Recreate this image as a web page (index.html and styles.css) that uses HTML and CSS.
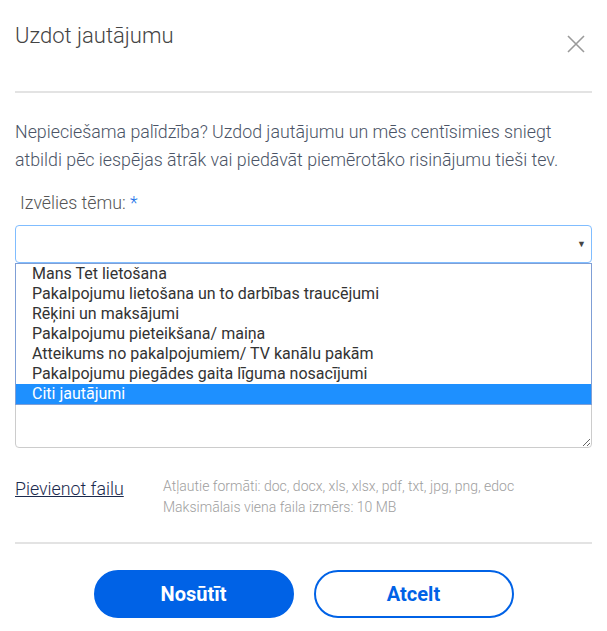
FILE: index.html
```html
<!DOCTYPE html>
<html lang="lv">
<head>
<meta charset="utf-8">
<link rel="stylesheet" href="styles.css">
</head>
<body>
<div class="modal">
  <div class="modal-header">
    <h1 class="title">Uzdot jautājumu</h1>
    <span class="close" aria-label="Aizvērt">
      <svg width="18" height="18" viewBox="0 0 18 18"><path d="M1 1L17 17M17 1L1 17" stroke="#9a9a9a" stroke-width="1.6" fill="none"/></svg>
    </span>
  </div>
  <div class="modal-body">
    <p class="intro">Nepieciešama palīdzība? Uzdod jautājumu un mēs centīsimies sniegt atbildi pēc iespējas ātrāk vai piedāvāt piemērotāko risinājumu tieši tev.</p>
    <label class="field-label">Izvēlies tēmu: <span class="req">*</span></label>
    <div class="select-wrap">
      <div class="select"><span class="arrow">▼</span></div>
      <ul class="options">
        <li>Mans Tet lietošana</li>
        <li>Pakalpojumu lietošana un to darbības traucējumi</li>
        <li>Rēķini un maksājumi</li>
        <li>Pakalpojumu pieteikšana/ maiņa</li>
        <li>Atteikums no pakalpojumiem/ TV kanālu pakām</li>
        <li>Pakalpojumu piegādes gaita līguma nosacījumi</li>
        <li class="selected">Citi jautājumi</li>
      </ul>
      <textarea class="message"></textarea>
    </div>
    <div class="attach">
      <a class="attach-link" href="#">Pievienot failu</a>
      <div class="attach-help">
        <div>Atļautie formāti: doc, docx, xls, xlsx, pdf, txt, jpg, png, edoc</div>
        <div>Maksimālais viena faila izmērs: 10 MB</div>
      </div>
    </div>
  </div>
  <div class="modal-footer">
    <button class="btn btn-primary">Nosūtīt</button>
    <button class="btn btn-outline">Atcelt</button>
  </div>
</div>
</body>
</html>
```
FILE: styles.css
```css
* { box-sizing: border-box; }
html, body { margin: 0; padding: 0; background: #fff; }
body { font-family: Roboto, "Noto Sans", sans-serif; }

.modal { padding: 0 15px; width: 607px; }

.modal-header {
  display: flex;
  justify-content: space-between;
  align-items: flex-start;
  height: 93px;
  border-bottom: 2px solid #e3e3e3;
}
.title {
  margin: 20px 0 0;
  font-size: 22px;
  font-weight: 300;
  color: #444;
  line-height: 32px;
}
.close {
  margin: 35px 7px 0 0;
  width: 18px;
  height: 18px;
  display: block;
}
.close svg { display: block; }

.modal-body { padding-top: 25px; }
.intro {
  margin: 0;
  font-size: 17.8px;
  line-height: 28px;
  font-weight: 300;
  color: #4b5466;
}
.field-label {
  display: block;
  margin: 17px 0 0 5px;
  font-size: 17.8px;
  font-weight: 300;
  line-height: 24px;
  color: #555;
}
.req { color: #1a73e8; }

.select-wrap { position: relative; margin-top: 10px; }
.select {
  height: 38px;
  border: 1px solid #80bdff;
  border-radius: 4px;
  position: relative;
}
.arrow {
  position: absolute;
  right: 5px;
  top: 13px;
  font-size: 9px;
  color: #444;
  line-height: 10px;
}
.options {
  position: absolute;
  left: 0;
  right: 0;
  top: 38px;
  margin: 0;
  padding: 0;
  list-style: none;
  background: #fff;
  border: 1px solid #7f9fd6;
  z-index: 2;
}
.options li {
  height: 20px;
  line-height: 20px;
  padding-left: 16px;
  font-size: 16px;
  color: #333;
  white-space: nowrap;
}
.options li.selected {
  background: #1e90ff;
  color: #fff;
}
.message {
  display: block;
  width: 100%;
  height: 163px;
  margin-top: 22px;
  border: 1px solid #ccc;
  border-radius: 4px;
  resize: vertical;
  font-family: inherit;
}

.attach {
  display: flex;
  align-items: flex-start;
  margin-top: 28px;
  padding-bottom: 24px;
  border-bottom: 2px solid #e3e3e3;
}
.attach-link {
  width: 148px;
  flex: none;
  font-size: 17.8px;
  font-weight: 300;
  line-height: 24px;
  color: #1b2a4e;
  text-decoration: underline;
  margin-top: 1px;
}
.attach-help {
  font-size: 14px;
  line-height: 21px;
  font-weight: 300;
  color: #9e9e9e;
}

.modal-footer {
  display: flex;
  justify-content: center;
  gap: 20px;
  padding-top: 26px;
}
.btn {
  width: 200px;
  height: 48px;
  border-radius: 24px;
  font-family: Roboto, sans-serif;
  font-size: 20px;
  font-weight: 700;
  cursor: pointer;
}
.btn-primary {
  background: #0062e6;
  border: 2px solid #0062e6;
  color: #fff;
}
.btn-outline {
  background: #fff;
  border: 2px solid #0062e6;
  color: #0062e6;
}
```
